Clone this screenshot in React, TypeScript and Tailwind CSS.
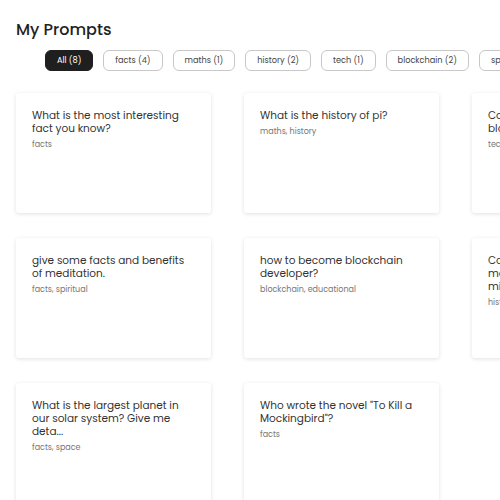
const filters = [
  { label: 'All', count: 8 },
  { label: 'facts', count: 4 },
  { label: 'maths', count: 1 },
  { label: 'history', count: 2 },
  { label: 'tech', count: 1 },
  { label: 'blockchain', count: 2 },
  { label: 'spiritual', count: 1 },
  { label: 'space', count: 1 },
  { label: 'educational', count: 1 },
];

const prompts = [
  { title: 'What is the most interesting fact you know?', tags: 'facts' },
  { title: 'What is the history of pi?', tags: 'maths, history' },
  { title: 'Could you describe how blockchain works?', tags: 'tech' },
  { title: 'give some facts and benefits of meditation.', tags: 'facts, spiritual' },
  { title: 'how to become blockchain developer?', tags: 'blockchain, educational' },
  { title: 'Could you tell me about the most important events of the middle ages?', tags: 'history' },
  { title: 'What is the largest planet in our solar system? Give me deta...', tags: 'facts, space' },
  { title: 'Who wrote the novel "To Kill a Mockingbird"?', tags: 'facts' },
];

export default function App() {
  return (
    <div className="w-[500px] h-[500px] overflow-hidden bg-white font-['Poppins','Noto_Sans',sans-serif] text-[#333]">
      <div className="pt-[16px] px-4">
        <h1 className="text-[16px] leading-[28px] font-medium text-[#222]">My Prompts</h1>

        <div className="flex gap-[10px] pl-[29px] mt-[6px] whitespace-nowrap">
          {filters.map((f, i) => (
            <button
              key={f.label}
              className={`h-[21px] px-[11px] rounded-md border text-[8.2px] shrink-0 ${
                i === 0 ? 'bg-[#1f1f1f] border-[#1f1f1f] text-white' : 'bg-white border-[#c8c8c8] text-[#444]'
              }`}
            >
              {f.label} ({f.count})
            </button>
          ))}
        </div>

        <div className="grid grid-cols-[195px_195px_195px] gap-x-[33px] gap-y-[25px] mt-[22px]">
          {prompts.map((p) => (
            <div key={p.title} className="h-[120px] rounded-[3px] bg-white shadow-[0_1px_4px_rgba(0,0,0,0.12)] p-4">
              <p className="text-[10.5px] leading-[13px] text-[#333]">{p.title}</p>
              <p className="text-[8px] leading-[10px] mt-[5px] text-[#777]">{p.tags}</p>
            </div>
          ))}
        </div>
      </div>
    </div>
  );
}
